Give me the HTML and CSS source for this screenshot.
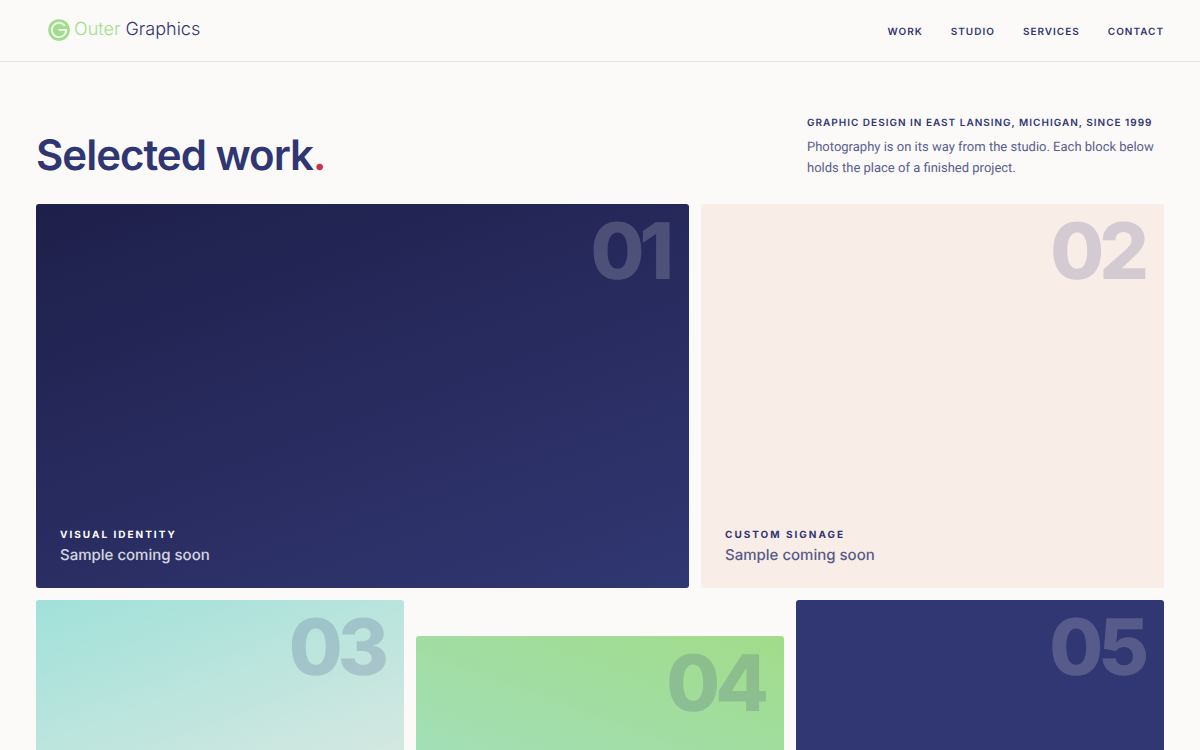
FILE: index.html
```html
<!DOCTYPE html>
<html lang="en">
<head>
<meta charset="utf-8">
<meta name="viewport" content="width=device-width, initial-scale=1">
<title>Outer Graphics</title>
<link rel="stylesheet" href="styles.css">
</head>
<body>
<header class="site-header">
  <a class="logo" href="#">
    <svg class="logo-mark" viewBox="0 0 22 22" aria-hidden="true">
      <circle cx="11" cy="11" r="10.8" fill="#9fdf8c"/>
      <path d="M16.8 6.9A7.1 7.1 0 1 0 18.1 10.8H10.6" fill="none" stroke="#fbfaf8" stroke-width="1.8"/>
    </svg>
    <span class="logo-text"><span class="logo-outer">Outer</span> Graphics</span>
  </a>
  <nav class="nav" aria-label="Main">
    <a href="#work">Work</a>
    <a href="#studio">Studio</a>
    <a href="#services">Services</a>
    <a href="#contact">Contact</a>
  </nav>
</header>
<main class="page" id="work">
  <section class="intro">
    <h1 class="title">Selected work<span class="dot">.</span></h1>
    <div class="about">
      <p class="eyebrow">Graphic design in East Lansing, Michigan, since 1999</p>
      <p class="note">Photography is on its way from the studio. Each block below holds the place of a finished project.</p>
    </div>
  </section>
  <section class="grid">
    <article class="card wide night">
      <span class="number">01</span>
      <h2 class="label">Visual identity</h2>
      <p class="status">Sample coming soon</p>
    </article>
    <article class="card medium peach">
      <span class="number">02</span>
      <h2 class="label">Custom signage</h2>
      <p class="status">Sample coming soon</p>
    </article>
    <article class="card third aqua"><span class="number">03</span></article>
    <article class="card third green"><span class="number">04</span></article>
    <article class="card third navy"><span class="number">05</span></article>
  </section>
</main>
</body>
</html>
```
FILE: styles.css
```css
* { box-sizing: border-box; }

body {
  margin: 0;
  background: #fbfaf8;
  color: #2f3672;
  font-family: Inter, "Liberation Sans", sans-serif;
  text-rendering: geometricPrecision;
}

h1, h2, p { margin: 0; }
a { color: inherit; text-decoration: none; }

.site-header {
  display: flex;
  align-items: center;
  justify-content: space-between;
  padding: 16px 36px 17px 48px;
  border-bottom: 1px solid #e3e2e8;
}

.logo { display: flex; align-items: center; gap: 4px; }
.logo-mark { width: 22px; height: 22px; }
.logo-text { font-size: 18px; line-height: 28px; font-weight: 300; }
.logo-outer { color: #9fdf8c; }

.nav {
  display: flex;
  gap: 28px;
  padding-top: 3px;
  font-size: 10px;
  line-height: 16px;
  font-weight: 600;
  letter-spacing: 1px;
  text-transform: uppercase;
}

.page { padding: 51px 36px 48px; }

.intro {
  display: flex;
  align-items: flex-end;
  justify-content: space-between;
  gap: 32px;
  margin-bottom: 25px;
}

.title {
  font-size: 42px;
  line-height: 46px;
  font-weight: 600;
  letter-spacing: -1px;
}
.dot { color: #cb3150; }

.about { width: 357px; }
.eyebrow {
  margin-bottom: 4px;
  font-size: 10px;
  line-height: 20px;
  font-weight: 600;
  letter-spacing: 1px;
  text-transform: uppercase;
  white-space: nowrap;
}
.note {
  font-family: Roboto, Inter, sans-serif;
  font-size: 13px;
  line-height: 21px;
  color: #595e8e;
}

.grid {
  display: grid;
  grid-template-columns: repeat(12, 1fr);
  gap: 12px;
}

.card {
  position: relative;
  display: flex;
  flex-direction: column;
  justify-content: flex-end;
  min-height: 320px;
  padding: 22px 24px;
  border-radius: 3px;
}
.wide { grid-column: span 7; min-height: 384px; }
.medium { grid-column: span 5; min-height: 384px; }
.third { grid-column: span 4; }

.night { background: linear-gradient(160deg, #1e1f4a, #313772); color: #fff; }
.peach { background: #f9ede7; }
.aqua { background: linear-gradient(160deg, #a0e1d9, #f9ede7); }
.green { margin-top: 36px; background: linear-gradient(200deg, #a1dc8a, #a3e1da); }
.navy { background: #313772; color: #fff; }

.number {
  position: absolute;
  top: 10px;
  right: 20px;
  font-size: 78px;
  line-height: 74px;
  font-weight: 800;
  letter-spacing: -5px;
  opacity: 0.18;
}

.label {
  font-size: 10px;
  line-height: 18px;
  font-weight: 700;
  letter-spacing: 2px;
  text-transform: uppercase;
}
.status { font-size: 15px; line-height: 22px; font-weight: 500; opacity: 0.8; }
```
